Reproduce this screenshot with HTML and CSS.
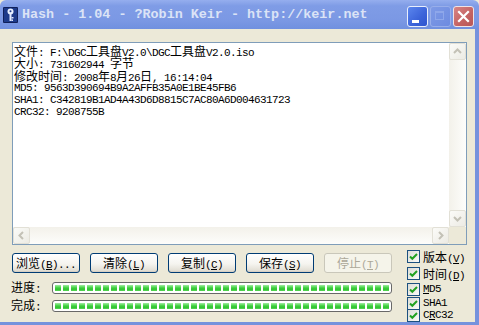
FILE: index.html
```html
<!DOCTYPE html>
<html>
<head>
<meta charset="utf-8">
<link rel="stylesheet" href="styles.css">
</head>
<body>
<div class="win">
  <div class="titlebar">
    <svg class="appicon" width="15" height="16" viewBox="0 0 15 16">
      <rect x="0" y="0" width="15" height="16" rx="1" fill="#10205a"/>
      <rect x="1" y="1" width="13" height="14" fill="#1d3a8a"/>
      <circle cx="7.5" cy="4.5" r="3" fill="#e8f0ff"/>
      <circle cx="7.5" cy="4.3" r="1" fill="#1d3a8a"/>
      <rect x="6.5" y="7" width="2" height="7" fill="#dfe8ff"/>
      <rect x="8.5" y="10" width="2" height="1.5" fill="#dfe8ff"/>
      <rect x="8.5" y="12.5" width="1.5" height="1.5" fill="#dfe8ff"/>
    </svg>
    <span class="title">Hash - 1.04 - ?Robin Keir - http://keir.net</span>
    <div class="ctrls">
      <span class="cbtn min"><span class="minbar"></span></span>
      <span class="cbtn max"><span class="maxbox"></span></span>
      <span class="cbtn close">
        <svg width="19" height="19" viewBox="0 0 19 19"><path d="M5 5 L14 14 M14 5 L5 14" stroke="#fff" stroke-width="2.2" stroke-linecap="square"/></svg>
      </span>
    </div>
  </div>
  <div class="client">
    <div class="edit">
      <div class="text">
        <div class="ln"><span class="cj">文件</span>: F:\DGC<span class="cj">工具盘</span>V2.0\DGC<span class="cj">工具盘</span>V2.0.iso</div>
        <div class="ln"><span class="cj">大小</span>: 731602944 <span class="cj">字节</span></div>
        <div class="ln"><span class="cj">修改时间</span>: 2008<span class="cj">年</span>8<span class="cj">月</span>26<span class="cj">日</span>, 16:14:04</div>
        <div class="ln">MD5: 9563D390694B9A2AFFB35A0E1BE45FB6</div>
        <div class="ln">SHA1: C342819B1AD4A43D6D8815C7AC80A6D004631723</div>
        <div class="ln">CRC32: 9208755B</div>
      </div>
      <div class="vscroll">
        <span class="sbtn"><svg width="15" height="15" viewBox="0 0 15 15"><path d="M4 9 L7.5 5.5 L11 9" fill="none" stroke="#c3c1b6" stroke-width="2"/></svg></span>
        <span class="strack"></span>
        <span class="sbtn"><svg width="15" height="15" viewBox="0 0 15 15"><path d="M4 6 L7.5 9.5 L11 6" fill="none" stroke="#c3c1b6" stroke-width="2"/></svg></span>
      </div>
      <div class="hscroll">
        <span class="sbtn"><svg width="15" height="15" viewBox="0 0 15 15"><path d="M9 4 L5.5 7.5 L9 11" fill="none" stroke="#c3c1b6" stroke-width="2"/></svg></span>
        <span class="strack"></span>
        <span class="sbtn"><svg width="15" height="15" viewBox="0 0 15 15"><path d="M6 4 L9.5 7.5 L6 11" fill="none" stroke="#c3c1b6" stroke-width="2"/></svg></span>
      </div>
      <div class="corner"></div>
    </div>
    <div class="bottom">
      <div class="left">
        <div class="btns">
          <span class="btn">浏览<span class="a">(<u>B</u>)...</span></span>
          <span class="btn">清除<span class="a">(<u>L</u>)</span></span>
          <span class="btn">复制<span class="a">(<u>C</u>)</span></span>
          <span class="btn">保存<span class="a">(<u>S</u>)</span></span>
          <span class="btn disabled">停止<span class="a">(<u>T</u>)</span></span>
        </div>
        <div class="prow first"><span class="plabel">进度<span class="a">:</span></span><div class="pbar"><div class="fill"></div></div></div>
        <div class="prow"><span class="plabel">完成<span class="a">:</span></span><div class="pbar"><div class="fill"></div></div></div>
      </div>
      <div class="checks">
        <div class="crow r1"><span class="chk"><svg width="11" height="11" viewBox="0 0 11 11"><path d="M2 5.5 L4.3 7.8 L9 3" fill="none" stroke="#21a121" stroke-width="2"/></svg></span><span class="clabel">版本<span class="a">(<u>V</u>)</span></span></div>
        <div class="crow r2"><span class="chk"><svg width="11" height="11" viewBox="0 0 11 11"><path d="M2 5.5 L4.3 7.8 L9 3" fill="none" stroke="#21a121" stroke-width="2"/></svg></span><span class="clabel">时间<span class="a">(<u>D</u>)</span></span></div>
        <div class="crow r3"><span class="chk"><svg width="11" height="11" viewBox="0 0 11 11"><path d="M2 5.5 L4.3 7.8 L9 3" fill="none" stroke="#21a121" stroke-width="2"/></svg></span><span class="clabel mono"><u>M</u>D5</span></div>
        <div class="crow r4 clip"><span class="chk"><svg width="11" height="11" viewBox="0 0 11 11"><path d="M2 5.5 L4.3 7.8 L9 3" fill="none" stroke="#21a121" stroke-width="2"/></svg></span><span class="clabel mono">SHA1</span></div>
        <div class="crow r5"><span class="chk"><svg width="11" height="11" viewBox="0 0 11 11"><path d="M2 5.5 L4.3 7.8 L9 3" fill="none" stroke="#21a121" stroke-width="2"/></svg></span><span class="clabel mono">C<u>R</u>C32</span></div>
      </div>
    </div>
  </div>
</div>
</body>
</html>
```

FILE: styles.css
```css
html, body {
  margin: 0;
  padding: 0;
  background: #ece9d8;
}
.win {
  width: 479px;
  height: 325px;
  display: flex;
  flex-direction: column;
  overflow: hidden;
  background: #ece9d8;
}
.titlebar {
  height: 29px;
  flex: none;
  display: flex;
  align-items: flex-start;
  box-sizing: border-box;
  padding-left: 3px;
  background: linear-gradient(#95aeee, #7f9ce6 20%, #7b98e4 70%, #7090df);
  border-radius: 6px 6px 0 0;
}
.appicon {
  margin-top: 7px;
  flex: none;
}
.title {
  margin-left: 4px;
  margin-top: 7px;
  font: bold 13.4px/16px "Liberation Mono", monospace;
  color: #dbe3f6;
  white-space: pre;
}
.ctrls {
  margin-left: auto;
  margin-right: 5px;
  margin-top: 6px;
  display: flex;
  gap: 2px;
}
.cbtn {
  width: 21px;
  height: 21px;
  box-sizing: border-box;
  border-radius: 3px;
  border: 1px solid #e8eefc;
  position: relative;
  display: block;
}
.min {
  background: linear-gradient(135deg, #5b86ee, #3b63d9 60%, #2f55cf);
}
.minbar {
  position: absolute;
  left: 4px;
  top: 13px;
  width: 7px;
  height: 3px;
  background: #fff;
}
.max {
  border-color: #98aeea;
  background: linear-gradient(135deg, #7e9ae6, #6d8be0);
}
.maxbox {
  position: absolute;
  left: 4px;
  top: 4px;
  width: 9px;
  height: 9px;
  box-sizing: border-box;
  border: 1px solid #8ea7ea;
  border-top-width: 2px;
}
.close {
  border-color: #efe3e6;
  background: linear-gradient(135deg, #d88585, #c46262 60%, #b95757);
}
.close svg {
  display: block;
}
.client {
  flex: 1;
  box-sizing: border-box;
  border-right: 4px solid #7592dd;
  border-bottom: 4px solid #7592dd;
  padding: 13px 8px 0 12px;
  display: flex;
  flex-direction: column;
}
.edit {
  width: 455px;
  height: 203px;
  flex: none;
  box-sizing: border-box;
  border: 1px solid #7f9db9;
  background: #fff;
  display: grid;
  grid-template-columns: 1fr 17px;
  grid-template-rows: 1fr 17px;
}
.text {
  padding: 2px 0 0 1px;
  font: 11px "Liberation Mono", monospace;
  letter-spacing: -0.6px;
  color: #000;
  overflow: hidden;
}
.ln {
  height: 12.3px;
  line-height: 12.3px;
  white-space: pre;
}
.cj {
  font-family: "Noto Sans CJK SC", sans-serif;
  font-size: 12px;
  line-height: 12px;
  letter-spacing: 0;
}
.a {
  font-family: "Liberation Mono", monospace;
  font-size: 11px;
  letter-spacing: -0.6px;
}
.vscroll {
  display: flex;
  flex-direction: column;
  background: linear-gradient(90deg, #f3f1ea, #fdfdfb);
}
.hscroll {
  display: flex;
  background: linear-gradient(#f3f1ea, #fdfdfb);
}
.strack {
  flex: 1;
}
.sbtn {
  width: 17px;
  height: 17px;
  flex: none;
  box-sizing: border-box;
  border: 1px solid #e2e0d6;
  border-radius: 2px;
  background: linear-gradient(135deg, #fbfbf8, #ecebe4);
  display: flex;
  align-items: center;
  justify-content: center;
}
.corner {
  background: #ece9d8;
}
.bottom {
  display: flex;
  margin-top: 5px;
}
.left {
  width: 380px;
  flex: none;
  padding-top: 3px;
}
.btns {
  display: flex;
  gap: 10px;
}
.btn {
  width: 68px;
  height: 20px;
  box-sizing: border-box;
  border: 1px solid #003c74;
  border-radius: 3px;
  background: linear-gradient(#ffffff, #f5f4ef 55%, #e3e0d6 90%, #d6d0c5);
  box-shadow: inset 0 -1px 0 #d6d0c5;
  font: 12px/18px "Noto Sans CJK SC", sans-serif;
  text-align: center;
  color: #000;
  white-space: pre;
}
.btn u, .clabel u {
  text-underline-offset: 1px;
}
.btn.disabled {
  border-color: #c9c7ba;
  background: #f5f4ea;
  box-shadow: none;
  color: #aca899;
}
.prow {
  display: flex;
  align-items: center;
  height: 12px;
  margin-top: 6px;
}
.prow.first {
  margin-top: 9px;
}
.plabel {
  width: 41px;
  margin-left: -1px;
  flex: none;
  font: 12px/12px "Noto Sans CJK SC", sans-serif;
  color: #000;
}
.pbar {
  width: 341px;
  height: 12px;
  box-sizing: border-box;
  border: 1px solid #686868;
  border-radius: 3px;
  background: #fff;
  padding: 2px;
}
.fill {
  height: 6px;
  background:
    repeating-linear-gradient(90deg, transparent 0 6px, #fff 6px 8px),
    linear-gradient(#a4eca4, #4fd64f 40%, #2ec22e 70%, #5ad65a);
}
.checks {
  margin-left: 15px;
  display: flex;
  flex-direction: column;
}
.crow {
  display: flex;
  align-items: flex-start;
  gap: 3px;
}
.crow.clip {
  overflow: hidden;
}
.r1 { height: 17px; }
.r2 { height: 16px; }
.r3 { height: 14px; }
.r4 { height: 12px; }
.r5 { height: 13px; }
.chk {
  width: 13px;
  height: 13px;
  flex: none;
  box-sizing: border-box;
  border: 1px solid #1c5180;
  background: linear-gradient(135deg, #dcdcd7, #fbfbf8);
  display: block;
}
.chk svg {
  display: block;
}
.clabel {
  font: 12px/13px "Noto Sans CJK SC", sans-serif;
  color: #000;
  white-space: pre;
}
.clabel.mono {
  font: 11px/13px "Liberation Mono", monospace;
  letter-spacing: -0.6px;
}
```
